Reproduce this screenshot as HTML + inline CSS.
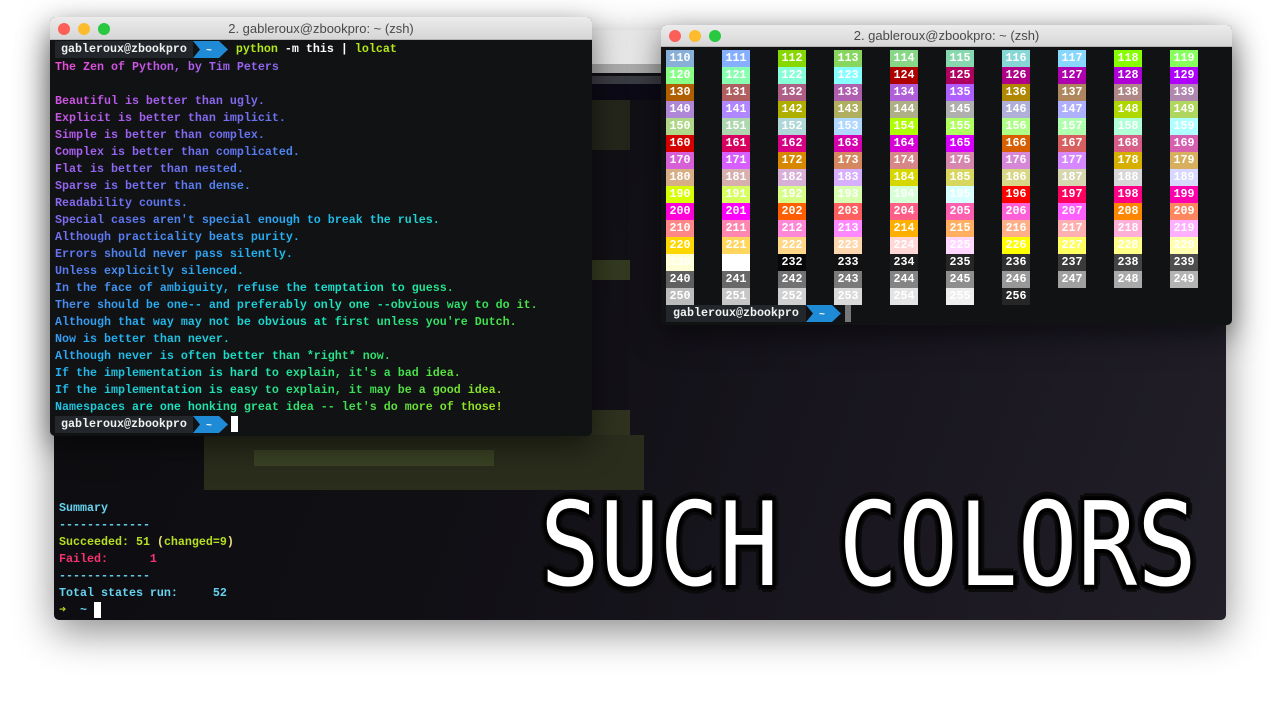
<!DOCTYPE html>
<html><head><meta charset="utf-8"><style>
*{margin:0;padding:0;box-sizing:border-box}
body{width:1280px;height:720px;background:#fff;position:relative;overflow:hidden;font-family:"Liberation Mono","DejaVu Sans Mono",monospace}
.abs{position:absolute}
.big{left:54px;top:30px;width:1172px;height:590px;border-radius:5px;overflow:hidden;box-shadow:0 12px 40px rgba(0,0,0,.45);
 background:linear-gradient(110deg,#0d0d10 0%,#100f14 40%,#19161f 70%,#221f29 100%)}
.win{border-radius:5px;overflow:hidden;box-shadow:0 10px 30px rgba(0,0,0,.5);background:#111214}
.tb{height:23px;background:linear-gradient(#ececec,#d6d6d6);border-bottom:1px solid #b5b5b5;text-align:center;font:13px "Liberation Sans","DejaVu Sans",sans-serif;color:#4a4a4a;line-height:23px;position:relative}
.dot{position:absolute;top:6px;width:12px;height:12px;border-radius:50%}
.term{font-size:11.67px;line-height:17px;white-space:pre;font-weight:bold}
.pr{display:inline-block;background:#23272b;color:#f2f2f2;height:17px;padding:0 6px}
.arr{display:inline-block;position:relative;height:17px;vertical-align:top}
.rain{background:linear-gradient(147.4deg,hsl(310,85%,62%) 0px,hsl(270,85%,66%) 89px,hsl(230,85%,66%) 177px,hsl(200,90%,55%) 266px,hsl(170,80%,50%) 355px,hsl(130,75%,55%) 443px,hsl(80,80%,50%) 532px,hsl(60,85%,50%) 565px);-webkit-background-clip:text;background-clip:text;color:transparent}
.grid i{position:absolute;width:28px;height:17px;font-style:normal;color:#fff;font-size:11.67px;line-height:17px;text-align:center;font-weight:bold}
.such{left:540px;top:478px;font-family:"DejaVu Sans Mono",monospace;font-size:116px;color:#fff;transform:scaleX(.855);transform-origin:0 0;white-space:pre;
 text-shadow:4px 0 #000,-4px 0 #000,0 4px #000,0 -4px #000,3px 3px #000,-3px 3px #000,3px -3px #000,-3px -3px #000,7px 0 #0a0a0a,-7px 0 #0a0a0a,0 7px #0a0a0a,0 -7px #0a0a0a,5px 5px #0a0a0a,-5px 5px #0a0a0a,5px -5px #0a0a0a,-5px -5px #0a0a0a}
</style></head><body>

<div class="abs big">
 <div class="abs" style="left:0;top:0;width:1172px;height:34px;background:#e6e6e6"></div>
 <div class="abs" style="left:0;top:34px;width:1172px;height:9px;background:#a9a9a9"></div>
 <div class="abs" style="left:0;top:46px;width:1172px;height:8px;background:#3a3a42"></div>
 <div class="abs" style="left:0;top:54px;width:1172px;height:16px;background:#0c0a16"></div>
 <div class="abs" style="left:536px;top:70px;width:40px;height:50px;background:#24261b"></div>
 <div class="abs" style="left:536px;top:230px;width:40px;height:20px;background:#343a20"></div>
 <div class="abs" style="left:536px;top:380px;width:40px;height:30px;background:#2e321e"></div>
 <div class="abs" style="left:150px;top:405px;width:440px;height:55px;background:#2a2d1c"></div>
 <div class="abs" style="left:200px;top:420px;width:240px;height:16px;background:#3a4224"></div>
 <div class="abs term" style="left:5px;top:470px"><span style="color:#67d3f0">Summary
-------------</span>
<span style="color:#b6e021">Succeeded: 51 </span><span style="color:#e8e07a">(</span><span style="color:#b6e021">changed=9</span><span style="color:#e8e07a">)</span>
<span style="color:#f5336e">Failed:      1</span>
<span style="color:#67d3f0">-------------
Total states run:     52</span>
<span style="color:#b6e021">➜</span>  <span style="color:#67d3f0">~</span> <span style="display:inline-block;width:7px;height:16px;background:#fff;vertical-align:top"></span></div>
</div>

<div class="abs such">SUCH COLORS</div>

<!-- left terminal -->
<div class="abs win" style="left:50px;top:17px;width:542px;height:419px">
 <div class="tb">2. gableroux@zbookpro: ~ (zsh)
  <span class="dot" style="left:8px;background:#fc5f57"></span><span class="dot" style="left:28px;background:#fdbc2e"></span><span class="dot" style="left:48px;background:#28c840"></span></div>
 <div class="abs term" style="left:5px;top:24px;color:#fff"><span class="pr">gableroux@zbookpro</span><span class="arr"><svg width="36" height="17"><path d="M0 0H26L35 8.5L26 17H0L7 8.5Z" fill="#1f8ad6"/><text x="13" y="12" fill="#fff" font-size="10" font-family="Liberation Mono">~</text></svg></span><span style="color:#b3e81b"> python</span> -m this | <span style="color:#b3e81b">lolcat</span></div>
 <div class="abs term rain" style="left:5px;top:42px;width:490px;height:357px">The Zen of Python, by Tim Peters

Beautiful is better than ugly.
Explicit is better than implicit.
Simple is better than complex.
Complex is better than complicated.
Flat is better than nested.
Sparse is better than dense.
Readability counts.
Special cases aren't special enough to break the rules.
Although practicality beats purity.
Errors should never pass silently.
Unless explicitly silenced.
In the face of ambiguity, refuse the temptation to guess.
There should be one-- and preferably only one --obvious way to do it.
Although that way may not be obvious at first unless you're Dutch.
Now is better than never.
Although never is often better than *right* now.
If the implementation is hard to explain, it's a bad idea.
If the implementation is easy to explain, it may be a good idea.
Namespaces are one honking great idea -- let's do more of those!</div>
 <div class="abs term" style="left:5px;top:399px;color:#fff"><span class="pr">gableroux@zbookpro</span><span class="arr"><svg width="36" height="17"><path d="M0 0H26L35 8.5L26 17H0L7 8.5Z" fill="#1f8ad6"/><text x="13" y="12" fill="#fff" font-size="10" font-family="Liberation Mono">~</text></svg></span><span style="display:inline-block;width:7px;height:16px;background:#fff;vertical-align:top;margin-left:2px"></span></div>
</div>

<!-- right terminal -->
<div class="abs win" style="left:661px;top:25px;width:571px;height:300px">
 <div class="tb" style="height:22px;line-height:22px">2. gableroux@zbookpro: ~ (zsh)
  <span class="dot" style="left:8px;top:5px;background:#fc5f57"></span><span class="dot" style="left:28px;top:5px;background:#fdbc2e"></span><span class="dot" style="left:48px;top:5px;background:#28c840"></span></div>
 <div class="abs grid" style="left:5px;top:25px;width:560px;height:260px">
<i style="left:0px;top:0px;background:#87afd7">110</i><i style="left:56px;top:0px;background:#87afff">111</i><i style="left:112px;top:0px;background:#87d700">112</i><i style="left:168px;top:0px;background:#87d75f">113</i><i style="left:224px;top:0px;background:#87d787">114</i><i style="left:280px;top:0px;background:#87d7af">115</i><i style="left:336px;top:0px;background:#87d7d7">116</i><i style="left:392px;top:0px;background:#87d7ff">117</i><i style="left:448px;top:0px;background:#87ff00">118</i><i style="left:504px;top:0px;background:#87ff5f">119</i>
<i style="left:0px;top:17px;background:#87ff87">120</i><i style="left:56px;top:17px;background:#87ffaf">121</i><i style="left:112px;top:17px;background:#87ffd7">122</i><i style="left:168px;top:17px;background:#87ffff">123</i><i style="left:224px;top:17px;background:#af0000">124</i><i style="left:280px;top:17px;background:#af005f">125</i><i style="left:336px;top:17px;background:#af0087">126</i><i style="left:392px;top:17px;background:#af00af">127</i><i style="left:448px;top:17px;background:#af00d7">128</i><i style="left:504px;top:17px;background:#af00ff">129</i>
<i style="left:0px;top:34px;background:#af5f00">130</i><i style="left:56px;top:34px;background:#af5f5f">131</i><i style="left:112px;top:34px;background:#af5f87">132</i><i style="left:168px;top:34px;background:#af5faf">133</i><i style="left:224px;top:34px;background:#af5fd7">134</i><i style="left:280px;top:34px;background:#af5fff">135</i><i style="left:336px;top:34px;background:#af8700">136</i><i style="left:392px;top:34px;background:#af875f">137</i><i style="left:448px;top:34px;background:#af8787">138</i><i style="left:504px;top:34px;background:#af87af">139</i>
<i style="left:0px;top:51px;background:#af87d7">140</i><i style="left:56px;top:51px;background:#af87ff">141</i><i style="left:112px;top:51px;background:#afaf00">142</i><i style="left:168px;top:51px;background:#afaf5f">143</i><i style="left:224px;top:51px;background:#afaf87">144</i><i style="left:280px;top:51px;background:#afafaf">145</i><i style="left:336px;top:51px;background:#afafd7">146</i><i style="left:392px;top:51px;background:#afafff">147</i><i style="left:448px;top:51px;background:#afd700">148</i><i style="left:504px;top:51px;background:#afd75f">149</i>
<i style="left:0px;top:68px;background:#afd787">150</i><i style="left:56px;top:68px;background:#afd7af">151</i><i style="left:112px;top:68px;background:#afd7d7">152</i><i style="left:168px;top:68px;background:#afd7ff">153</i><i style="left:224px;top:68px;background:#afff00">154</i><i style="left:280px;top:68px;background:#afff5f">155</i><i style="left:336px;top:68px;background:#afff87">156</i><i style="left:392px;top:68px;background:#afffaf">157</i><i style="left:448px;top:68px;background:#afffd7">158</i><i style="left:504px;top:68px;background:#afffff">159</i>
<i style="left:0px;top:85px;background:#d70000">160</i><i style="left:56px;top:85px;background:#d7005f">161</i><i style="left:112px;top:85px;background:#d70087">162</i><i style="left:168px;top:85px;background:#d700af">163</i><i style="left:224px;top:85px;background:#d700d7">164</i><i style="left:280px;top:85px;background:#d700ff">165</i><i style="left:336px;top:85px;background:#d75f00">166</i><i style="left:392px;top:85px;background:#d75f5f">167</i><i style="left:448px;top:85px;background:#d75f87">168</i><i style="left:504px;top:85px;background:#d75faf">169</i>
<i style="left:0px;top:102px;background:#d75fd7">170</i><i style="left:56px;top:102px;background:#d75fff">171</i><i style="left:112px;top:102px;background:#d78700">172</i><i style="left:168px;top:102px;background:#d7875f">173</i><i style="left:224px;top:102px;background:#d78787">174</i><i style="left:280px;top:102px;background:#d787af">175</i><i style="left:336px;top:102px;background:#d787d7">176</i><i style="left:392px;top:102px;background:#d787ff">177</i><i style="left:448px;top:102px;background:#d7af00">178</i><i style="left:504px;top:102px;background:#d7af5f">179</i>
<i style="left:0px;top:119px;background:#d7af87">180</i><i style="left:56px;top:119px;background:#d7afaf">181</i><i style="left:112px;top:119px;background:#d7afd7">182</i><i style="left:168px;top:119px;background:#d7afff">183</i><i style="left:224px;top:119px;background:#d7d700">184</i><i style="left:280px;top:119px;background:#d7d75f">185</i><i style="left:336px;top:119px;background:#d7d787">186</i><i style="left:392px;top:119px;background:#d7d7af">187</i><i style="left:448px;top:119px;background:#d7d7d7">188</i><i style="left:504px;top:119px;background:#d7d7ff">189</i>
<i style="left:0px;top:136px;background:#d7ff00">190</i><i style="left:56px;top:136px;background:#d7ff5f">191</i><i style="left:112px;top:136px;background:#d7ff87">192</i><i style="left:168px;top:136px;background:#d7ffaf">193</i><i style="left:224px;top:136px;background:#d7ffd7">194</i><i style="left:280px;top:136px;background:#d7ffff">195</i><i style="left:336px;top:136px;background:#ff0000">196</i><i style="left:392px;top:136px;background:#ff005f">197</i><i style="left:448px;top:136px;background:#ff0087">198</i><i style="left:504px;top:136px;background:#ff00af">199</i>
<i style="left:0px;top:153px;background:#ff00d7">200</i><i style="left:56px;top:153px;background:#ff00ff">201</i><i style="left:112px;top:153px;background:#ff5f00">202</i><i style="left:168px;top:153px;background:#ff5f5f">203</i><i style="left:224px;top:153px;background:#ff5f87">204</i><i style="left:280px;top:153px;background:#ff5faf">205</i><i style="left:336px;top:153px;background:#ff5fd7">206</i><i style="left:392px;top:153px;background:#ff5fff">207</i><i style="left:448px;top:153px;background:#ff8700">208</i><i style="left:504px;top:153px;background:#ff875f">209</i>
<i style="left:0px;top:170px;background:#ff8787">210</i><i style="left:56px;top:170px;background:#ff87af">211</i><i style="left:112px;top:170px;background:#ff87d7">212</i><i style="left:168px;top:170px;background:#ff87ff">213</i><i style="left:224px;top:170px;background:#ffaf00">214</i><i style="left:280px;top:170px;background:#ffaf5f">215</i><i style="left:336px;top:170px;background:#ffaf87">216</i><i style="left:392px;top:170px;background:#ffafaf">217</i><i style="left:448px;top:170px;background:#ffafd7">218</i><i style="left:504px;top:170px;background:#ffafff">219</i>
<i style="left:0px;top:187px;background:#ffd700">220</i><i style="left:56px;top:187px;background:#ffd75f">221</i><i style="left:112px;top:187px;background:#ffd787">222</i><i style="left:168px;top:187px;background:#ffd7af">223</i><i style="left:224px;top:187px;background:#ffd7d7">224</i><i style="left:280px;top:187px;background:#ffd7ff">225</i><i style="left:336px;top:187px;background:#ffff00">226</i><i style="left:392px;top:187px;background:#ffff5f">227</i><i style="left:448px;top:187px;background:#ffff87">228</i><i style="left:504px;top:187px;background:#ffffaf">229</i>
<i style="left:0px;top:204px;background:#ffffd7">230</i><i style="left:56px;top:204px;background:#ffffff">231</i><i style="left:112px;top:204px;background:#080808">232</i><i style="left:168px;top:204px;background:#121212">233</i><i style="left:224px;top:204px;background:#1c1c1c">234</i><i style="left:280px;top:204px;background:#262626">235</i><i style="left:336px;top:204px;background:#303030">236</i><i style="left:392px;top:204px;background:#3a3a3a">237</i><i style="left:448px;top:204px;background:#444444">238</i><i style="left:504px;top:204px;background:#4e4e4e">239</i>
<i style="left:0px;top:221px;background:#606060">240</i><i style="left:56px;top:221px;background:#686868">241</i><i style="left:112px;top:221px;background:#727272">242</i><i style="left:168px;top:221px;background:#7a7a7a">243</i><i style="left:224px;top:221px;background:#848484">244</i><i style="left:280px;top:221px;background:#8e8e8e">245</i><i style="left:336px;top:221px;background:#989898">246</i><i style="left:392px;top:221px;background:#a0a0a0">247</i><i style="left:448px;top:221px;background:#aaaaaa">248</i><i style="left:504px;top:221px;background:#b4b4b4">249</i>
<i style="left:0px;top:238px;background:#bcbcbc">250</i><i style="left:56px;top:238px;background:#c6c6c6">251</i><i style="left:112px;top:238px;background:#d0d0d0">252</i><i style="left:168px;top:238px;background:#dadada">253</i><i style="left:224px;top:238px;background:#e4e4e4">254</i><i style="left:280px;top:238px;background:#eeeeee">255</i><i style="left:336px;top:238px;background:#262626">256</i>
 </div>
 <div class="abs term" style="left:5px;top:280px;color:#fff"><span class="pr" style="padding:0 7px">gableroux@zbookpro</span><span class="arr"><svg width="36" height="17"><path d="M0 0H26L35 8.5L26 17H0L7 8.5Z" fill="#1f8ad6"/><text x="13" y="12" fill="#fff" font-size="10" font-family="Liberation Mono">~</text></svg></span><span style="display:inline-block;width:6px;height:17px;background:#777;vertical-align:top;margin-left:3px"></span></div>
</div>
</body></html>
